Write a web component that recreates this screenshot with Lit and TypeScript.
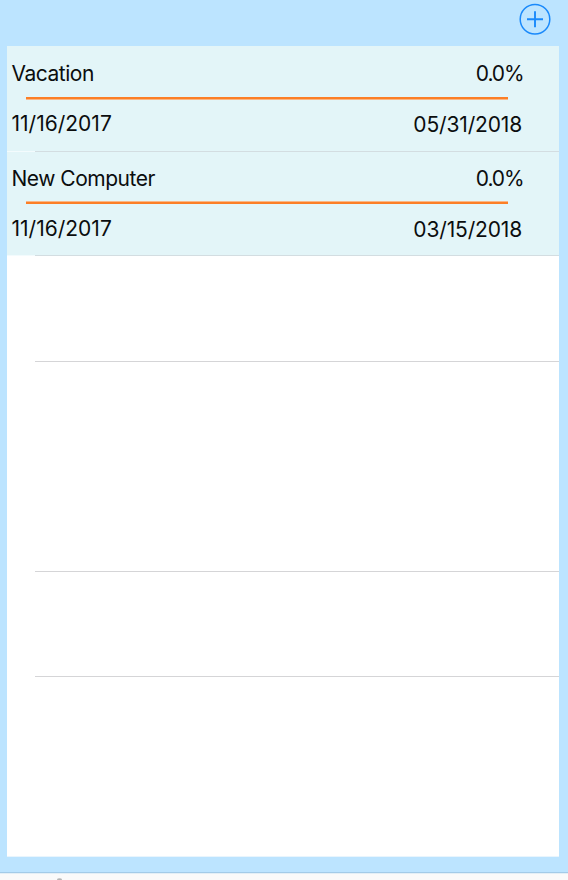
import { LitElement, html, css } from "lit";
import { customElement, property } from "lit/decorators.js";

interface Goal {
  name: string;
  percent: string;
  start: string;
  end: string;
}

const goals: Goal[] = [
  { name: "Vacation", percent: "0.0%", start: "11/16/2017", end: "05/31/2018" },
  { name: "New Computer", percent: "0.0%", start: "11/16/2017", end: "03/15/2018" },
];

@customElement("goal-row")
export class GoalRow extends LitElement {
  @property({ attribute: false }) goal!: Goal;

  static styles = css`
    :host {
      display: flex;
      flex-direction: column;
      box-sizing: border-box;
      background: linear-gradient(#d3dde1, #d3dde1) 28px 100% / 100% 1px no-repeat,
        linear-gradient(#f3fbfd, #f3fbfd) 0 100% / 28px 1px no-repeat #e3f5f8;
    }
    .line {
      display: flex;
      justify-content: space-between;
      padding: 0 36px 0 5px;
      line-height: 26px;
      white-space: nowrap;
    }
    .top {
      padding-top: var(--row-top, 15px);
      padding-right: 35px;
    }
    .name {
      margin-left: -0.5px;
      letter-spacing: -0.48px;
    }
    .percent {
      letter-spacing: -1.1px;
      margin-right: 0.5px;
    }
    .track {
      flex: none;
      height: 2px;
      margin: var(--track-gap, 10px) 51px 0 19px;
      background: #fc7f26;
      border: solid #f9b787;
      border-width: var(--track-edge, 0 0 1px);
    }
    .dates {
      padding-top: var(--dates-gap, 11px);
      padding-right: 37px;
    }
    .start {
      margin-left: -0.5px;
    }
    .end {
      padding-top: 1px;
      letter-spacing: -0.16px;
    }
  `;

  render() {
    return html`
      <div class="line top"><span class="name">${this.goal.name}</span><span class="percent">${this.goal.percent}</span></div>
      <div class="track"></div>
      <div class="line dates"><span class="start">${this.goal.start}</span><span class="end">${this.goal.end}</span></div>
    `;
  }
}

@customElement("app-root")
export class AppRoot extends LitElement {
  static styles = css`
    :host {
      display: flex;
      flex-direction: column;
      height: 880px;
      overflow: hidden;
      background: #bce4ff;
      color: #0b0d0e;
      font: 21px Inter, "Liberation Sans", sans-serif;
    }
    header {
      flex: none;
      height: 46px;
      display: flex;
      justify-content: flex-end;
      box-sizing: border-box;
      padding: 3px 17px 0 0;
    }
    .add {
      width: 32px;
      height: 32px;
      padding: 0;
      border: 0;
      background: none;
    }
    svg {
      display: block;
    }
    main {
      flex: none;
      height: 810px;
      margin: 0 9px 0 7px;
      background: #fff;
      border-bottom: 1px solid #e9f5fd;
    }
    goal-row {
      height: 106px;
    }
    goal-row + goal-row {
      height: 104px;
      --row-top: 14px;
      --track-gap: 9px;
      --dates-gap: 12px;
      --track-edge: 1px 0 0;
    }
    .empty {
      box-sizing: border-box;
      height: 106px;
      margin-left: 28px;
      border-bottom: 1px solid #d5d5d7;
    }
    .tall {
      height: 210px;
    }
    .short {
      height: 105px;
    }
    footer {
      flex: 1;
      margin-top: 15px;
      border-top: 1px solid #a3cbe8;
      background: linear-gradient(#e4eff6 1px, #fafafa 1px);
      display: flex;
      align-items: flex-end;
    }
    .tab {
      width: 5px;
      height: 2px;
      margin-left: 57px;
      border-radius: 2px 2px 0 0;
      background: linear-gradient(#d4d4d4, #aaa);
    }
  `;

  render() {
    return html`
      <header>
        <button class="add" aria-label="Add">
          <svg width="32" height="32" viewBox="0 0 32 32" fill="none" stroke="#1989fb">
            <circle cx="16" cy="16.3" r="14.8" stroke-width="1.5" />
            <path d="M8 16.3H24M16 8.3V24.3" stroke-width="1.9" />
          </svg>
        </button>
      </header>
      <main>
        ${goals.map((goal) => html`<goal-row .goal=${goal}></goal-row>`)}
        <div class="empty"></div>
        <div class="empty tall"></div>
        <div class="empty short"></div>
      </main>
      <footer><span class="tab"></span></footer>
    `;
  }
}
